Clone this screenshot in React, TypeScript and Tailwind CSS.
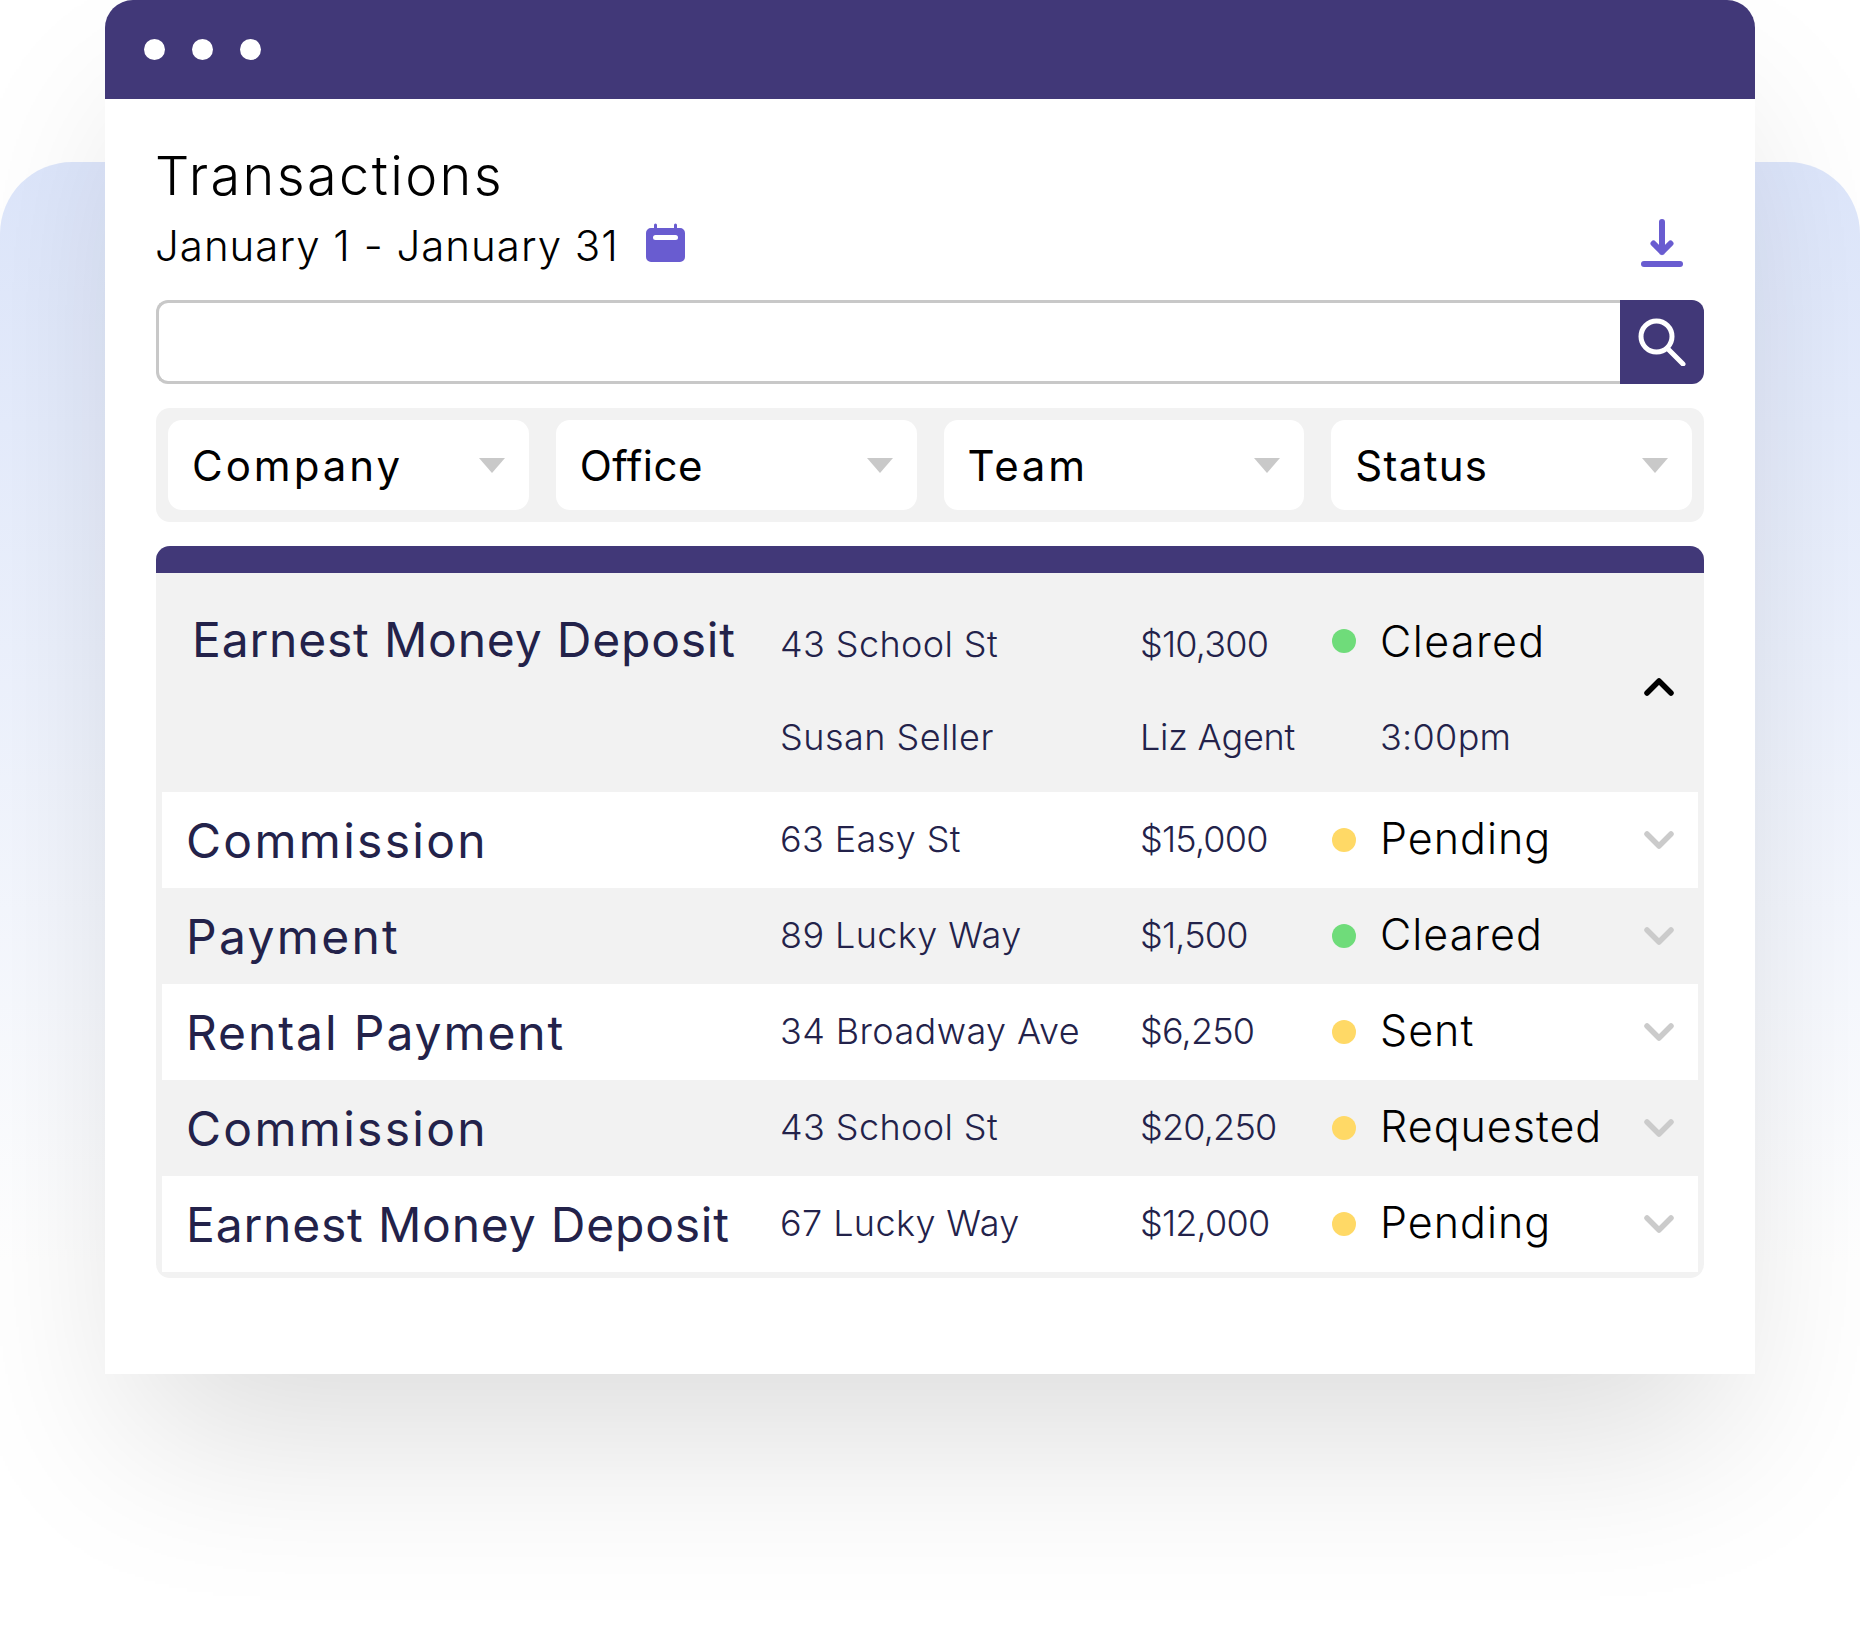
const font = 'font-["Inter","Liberation_Sans",sans-serif]';

interface Row {
  name: string;
  nameTracking: string;
  address: string;
  amount: string;
  dot: 'green' | 'yellow';
  status: string;
  white: boolean;
}

const rows: Row[] = [
  { name: 'Commission', nameTracking: 'tracking-[2.3px]', address: '63 Easy St', amount: '$15,000', dot: 'yellow', status: 'Pending', white: true },
  { name: 'Payment', nameTracking: 'tracking-[2.3px]', address: '89 Lucky Way', amount: '$1,500', dot: 'green', status: 'Cleared', white: false },
  { name: 'Rental Payment', nameTracking: 'tracking-[1.9px]', address: '34 Broadway Ave', amount: '$6,250', dot: 'yellow', status: 'Sent', white: true },
  { name: 'Commission', nameTracking: 'tracking-[2.3px]', address: '43 School St', amount: '$20,250', dot: 'yellow', status: 'Requested', white: false },
  { name: 'Earnest Money Deposit', nameTracking: 'tracking-[0.8px]', address: '67 Lucky Way', amount: '$12,000', dot: 'yellow', status: 'Pending', white: true },
];

function Dot({ color }: { color: 'green' | 'yellow' }) {
  return <span className={`w-6 h-6 rounded-full ${color === 'green' ? 'bg-[#6fdc7a]' : 'bg-[#ffd966]'}`} />;
}

function Chevron({ up }: { up?: boolean }) {
  return (
    <svg width="30" height="18" viewBox="0 0 30 18" fill="none" className={up ? 'row-span-2 -mt-1 stroke-black' : 'stroke-[#cbcbcb]'}>
      <path d={up ? 'M3 15L15 3l12 12' : 'M3 3l12 12L27 3'} strokeWidth="5.5" strokeLinecap="round" strokeLinejoin="round" />
    </svg>
  );
}

function Select({ label, tracking }: { label: string; tracking: string }) {
  return (
    <div className="flex-1 h-[90px] bg-white rounded-[14px] flex items-center justify-between pl-6 pr-6">
      <span className={`text-[42px] font-normal text-black ${tracking}`}>{label}</span>
      <svg width="26" height="15" viewBox="0 0 26 15">
        <path d="M0 0h26L13 15z" fill="#c9c9c9" />
      </svg>
    </div>
  );
}

function TableRow({ row }: { row: Row }) {
  return (
    <div
      className={`h-24 mx-1.5 pl-6 grid grid-cols-[594px_360px_192px_48px_264px_30px] items-center ${
        row.white ? 'bg-white' : 'bg-[#f2f2f2]'
      }`}
    >
      <span className={`text-[48px] text-[#23224a] mt-0.5 ${row.nameTracking}`}>{row.name}</span>
      <span className="text-[36px] font-light text-[#23224a] tracking-[0.4px] -mt-0.5">{row.address}</span>
      <span className="text-[36px] font-light text-[#23224a] tracking-[-0.8px] -mt-0.5">{row.amount}</span>
      <Dot color={row.dot} />
      <span className="text-[43px] font-light text-black tracking-[1px] -mt-[3px]">{row.status}</span>
      <Chevron />
    </div>
  );
}

export default function App() {
  return (
    <div className={`relative w-[1860px] h-[1638px] bg-white overflow-hidden ${font}`}>
      {/* blue panel behind the window */}
      <div className="absolute left-0 right-0 top-[162px] h-[1100px] rounded-t-[72px] bg-gradient-to-b from-[#dde6fb] to-white" />

      <div className="relative mx-[105px] h-[1374px] bg-white rounded-t-[28px] shadow-[0_90px_170px_-30px_rgba(0,0,0,0.14)]">
        {/* Title bar */}
        <div className="h-[99px] bg-[#413878] rounded-t-[28px] flex items-center gap-[27px] pl-[39px]">
          <span className="w-[21px] h-[21px] rounded-full bg-white" />
          <span className="w-[21px] h-[21px] rounded-full bg-white" />
          <span className="w-[21px] h-[21px] rounded-full bg-white" />
        </div>

        <div className="px-[51px] pt-[44px]">
          <h1 className="text-[54px] leading-[66px] font-light text-black tracking-[2.4px] -ml-px">Transactions</h1>

          {/* Date range */}
          <div className="h-[91px] flex items-start justify-between">
            <div className="flex items-center gap-[27px] pt-[11px] -ml-px">
              <span className="text-[42px] leading-[52px] font-light text-black tracking-[1px]">January 1 - January 31</span>
              <svg width="39" height="39" viewBox="0 0 39 39" className="-mt-2">
                <path d="M8 2a1.5 1.5 0 0 1 3 0v3h17V2a1.5 1.5 0 0 1 3 0v3h3a5 5 0 0 1 5 5v24a5 5 0 0 1-5 5H5a5 5 0 0 1-5-5V10a5 5 0 0 1 5-5h3z" fill="#695cd0" />
                <rect x="7" y="12" width="25" height="5" rx="2.5" fill="#fff" />
              </svg>
            </div>
            <svg width="42" height="48" viewBox="0 0 42 48" className="mr-[21px] mt-[10px]">
              <path d="M21 3v30M12.5 24.5l8.5 8.5 8.5-8.5" fill="none" stroke="#695cd0" strokeWidth="6" strokeLinecap="round" strokeLinejoin="round" />
              <path d="M3 45h36" stroke="#695cd0" strokeWidth="6" strokeLinecap="round" />
            </svg>
          </div>

          {/* Search */}
          <div className="flex h-[84px]">
            <div className="flex-1 border-[3px] border-r-0 border-[#c8c8c8] rounded-l-[12px] bg-white" />
            <div className="w-[84px] bg-[#413878] rounded-r-[12px] flex items-center justify-center">
              <svg width="48" height="48" viewBox="0 0 48 48" fill="none" stroke="#fff" strokeWidth="5" strokeLinecap="round">
                <circle cx="18.5" cy="18.5" r="15.5" />
                <path d="M30 31l15 15" />
              </svg>
            </div>
          </div>

          {/* Filters */}
          <div className="mt-6 p-3 bg-[#f2f2f2] rounded-[14px] flex gap-[27px]">
            <Select label="Company" tracking="tracking-[3px]" />
            <Select label="Office" tracking="tracking-[0.5px]" />
            <Select label="Team" tracking="tracking-[2.8px]" />
            <Select label="Status" tracking="tracking-[1.3px]" />
          </div>

          {/* Table */}
          <div className="mt-6 bg-[#f2f2f2] rounded-[14px] pb-1.5 overflow-hidden">
            <div className="h-[27px] bg-[#413878]" />

            {/* expanded row */}
            <div className="h-[219px] pl-[36px] pt-[38px] grid grid-cols-[588px_360px_192px_48px_264px_30px] grid-rows-[60px_60px] gap-y-9 items-center">
              <span className="text-[48px] text-[#23224a] tracking-[0.8px] -mt-0.5">Earnest Money Deposit</span>
              <span className="text-[36px] font-light text-[#23224a] tracking-[0.4px] mt-1.5">43 School St</span>
              <span className="text-[36px] font-light text-[#23224a] tracking-[-0.8px] mt-1.5">$10,300</span>
              <Dot color="green" />
              <span className="text-[43px] font-light text-black tracking-[1.4px]">Cleared</span>
              <Chevron up />
              <span />
              <span className="text-[36px] font-light text-[#23224a] tracking-[0.5px]">Susan Seller</span>
              <span className="text-[36px] font-light text-[#23224a] -tracking-[0.2px]">Liz Agent</span>
              <span />
              <span className="text-[36px] font-light text-[#23224a] tracking-[0.3px]">3:00pm</span>
            </div>

            {rows.map((row, i) => (
              <TableRow key={i} row={row} />
            ))}
          </div>
        </div>
      </div>
    </div>
  );
}
